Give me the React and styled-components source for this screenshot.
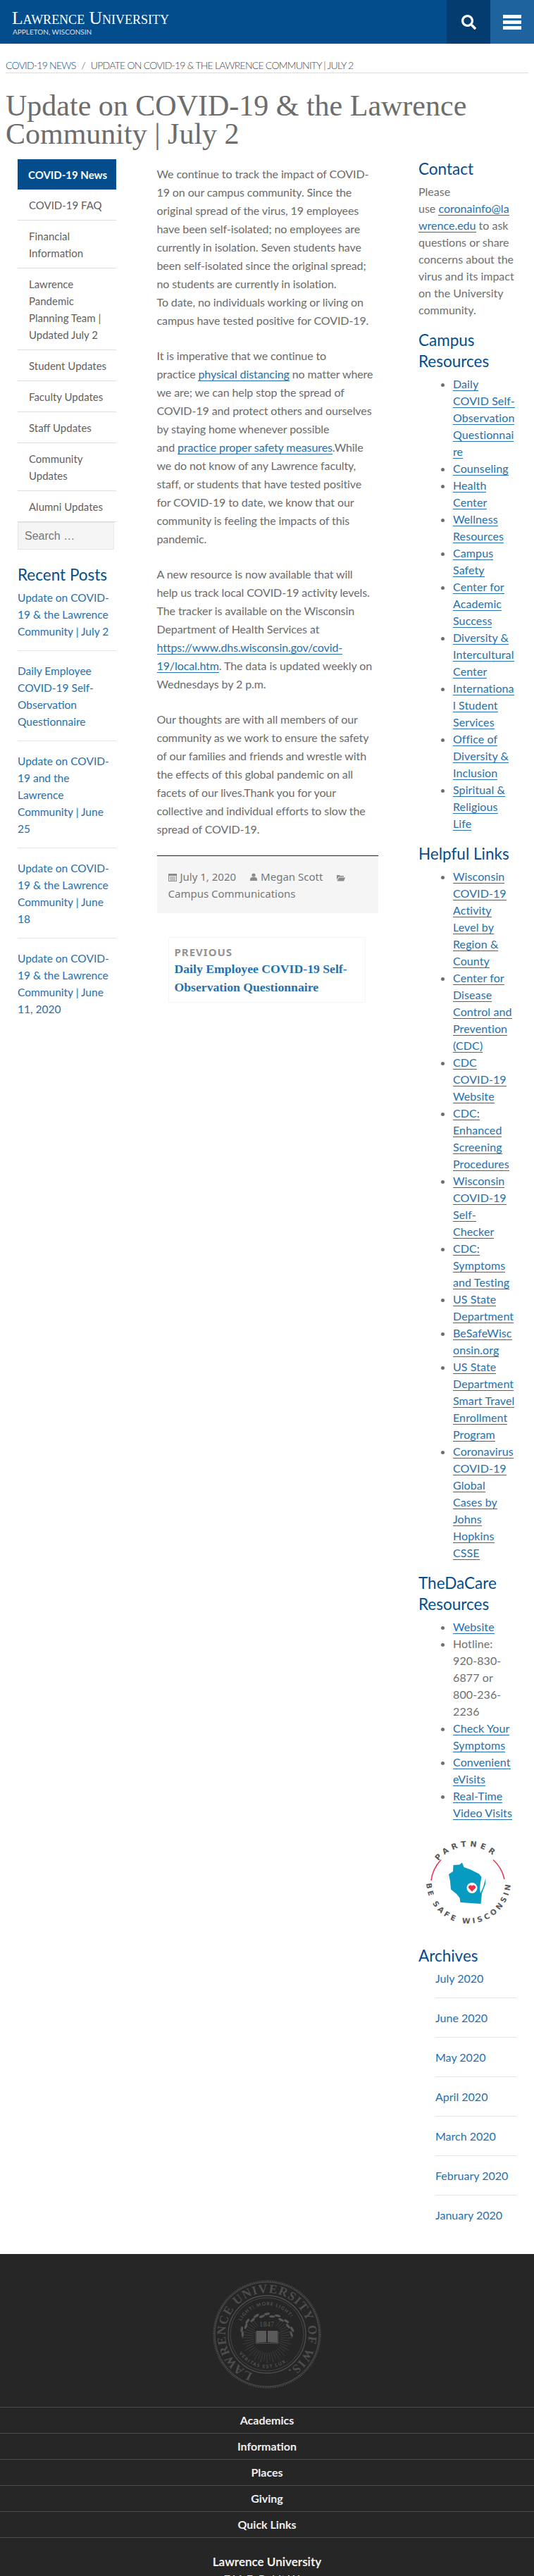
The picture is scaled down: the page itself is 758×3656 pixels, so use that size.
import styled, { createGlobalStyle } from "styled-components";
import { FaSearch } from "react-icons/fa";

const GlobalStyle = createGlobalStyle`
  html, body { margin: 0; padding: 0; background: #fff; }
  body { font-family: Lato, "Liberation Sans", sans-serif; color: #6b6b6b; }
  * { box-sizing: border-box; }
`;

const Page = styled.div`
  height: 3656px;
  overflow: hidden;
`;

const Header = styled.header`
  display: flex;
  align-items: stretch;
  height: 62px;
  background: #034d8c;
`;

const Brand = styled.div`
  flex: 1;
  padding: 13px 0 0 17px;
  color: #fff;
`;

const BrandName = styled.div`
  font-family: "Liberation Serif", serif;
  font-variant: small-caps;
  font-size: 25.5px;
  line-height: 25px;
`;

const BrandSub = styled.div`
  font-size: 10px;
  line-height: 12px;
  margin: 1px 0 0 1px;
  color: #d5e2ee;
`;

const HeaderButton = styled.div`
  width: 62px;
  display: flex;
  flex-direction: column;
  align-items: center;
  justify-content: center;
  gap: 3px;
  color: #fff;
  background: ${(p) => (p.$light ? "#1e639e" : "#033d70")};
`;

const MenuBar = styled.span`
  width: 26px;
  height: 5px;
  background: #fff;
`;

const Breadcrumb = styled.div`
  margin: 20px 8px 0;
  height: 22px;
  border-bottom: 1px solid #ddd;
  font-size: 14px;
  line-height: 21px;
  font-weight: 300;
  letter-spacing: -0.75px;
  text-transform: uppercase;
  color: #444;
  white-space: nowrap;
  a { color: #034d8c; }
  i { font-style: normal; margin: 0 8px; }
`;

const Title = styled.h1`
  margin: 26px 8px 0;
  font-family: "Liberation Serif", serif;
  font-size: 42px;
  line-height: 40px;
  font-weight: 400;
  color: #6d6d6d;
`;

const Columns = styled.main`
  display: grid;
  grid-template-columns: 140px 314px 139px;
  column-gap: 57.5px;
  padding: 15px 0 28px 25px;
`;

const NavList = styled.nav`
  display: flex;
  flex-direction: column;
  margin-top: 1px;
`;

const NavItem = styled.a`
  display: block;
  padding: 10px 8px 9px 16px;
  font-size: 15px;
  line-height: 24px;
  color: #5f5f5f;
  border-bottom: 1px solid #ddd;
`;

const NavActive = styled.a`
  display: block;
  padding: 10px 5px 9px 15px;
  background: #034d8c;
  color: #fff;
  font-weight: 700;
  font-size: 15px;
  line-height: 24px;
`;

const SearchBox = styled.input`
  display: block;
  width: 137px;
  height: 39px;
  padding: 0 9px;
  background: #f5f5f5;
  border: 1px solid #e6e6e6;
  font-family: "Liberation Sans", sans-serif;
  font-size: 16px;
  &::placeholder { color: #777; opacity: 1; }
`;

const WidgetTitle = styled.h2`
  margin: ${(p) => p.$top ?? 16}px 0 5px;
  font-size: 22.5px;
  line-height: 30px;
  font-weight: 400;
  color: #034d8c;
`;

const PostList = styled.div`
  display: flex;
  flex-direction: column;
`;

const PostLink = styled.a`
  display: block;
  padding: 16px 0 15px;
  font-size: 15.5px;
  line-height: 24px;
  color: #2570ad;
  border-bottom: 1px solid #e6e6e6;
  &:first-child { padding-top: 0; }
  &:last-child { border-bottom: none; }
`;

const Article = styled.article`
  padding-top: 9px;
`;

const Para = styled.p`
  margin: 0 0 24px;
  font-size: 16px;
  line-height: 26px;
  letter-spacing: -0.1px;
  color: #6b6b6b;
`;

const TextLink = styled.a`
  color: #2570ad;
  border-bottom: 1px solid #2570ad;
`;

const MetaBox = styled.div`
  margin-top: 23px;
  padding: 17px 16px 16px;
  background: #f5f5f5;
  border-top: 1px solid #222;
  font-family: "Noto Sans", sans-serif;
  font-size: 15px;
  line-height: 24px;
  color: #777;
`;

const MetaItem = styled.span`
  margin-right: 20px;
  svg { vertical-align: -1px; margin-right: 5px; }
`;

const PrevCard = styled.div`
  margin: 34px 18px 0 16px;
  padding: 9px 9px 9px 8px;
  height: 93px;
  border: 1px solid #f6f6f6;
  border-radius: 2px;
`;

const PrevLabel = styled.div`
  font-family: "Noto Sans", sans-serif;
  font-size: 15px;
  line-height: 22px;
  font-weight: 700;
  letter-spacing: 1px;
  color: #939393;
`;

const PrevTitle = styled.a`
  display: block;
  font-family: "Liberation Serif", serif;
  font-size: 17.7px;
  line-height: 26px;
  font-weight: 700;
  color: #2570ad;
`;

const Aside = styled.aside`
  min-width: 0;
`;

const SideText = styled.p`
  margin: 0;
  font-size: 16px;
  line-height: 24px;
  color: #6f6f6f;
  overflow-wrap: anywhere;
`;

const LinkList = styled.ul`
  margin: 0;
  padding: 0 2px 0 49px;
  font-size: 16px;
  line-height: 24px;
  letter-spacing: 0.1px;
  color: #6f6f6f;
  overflow-wrap: anywhere;
`;

const Partner = styled.svg`
  display: block;
  margin-top: 15px;
`;

const ArchiveList = styled.div`
  display: flex;
  flex-direction: column;
  padding-left: 24px;
`;

const ArchiveLink = styled.a`
  display: block;
  padding: 16px 0 15px;
  font-size: 16px;
  line-height: 24px;
  color: #2570ad;
  border-bottom: 1px solid #e6e6e6;
  &:first-child { padding-top: 0; }
  &:last-child { border-bottom: none; }
`;

const Footer = styled.footer`
  background: #262626;
  padding-top: 37px;
  text-align: center;
`;

const Seal = styled.svg`
  display: block;
  margin: 0 auto 26px;
`;

const FooterRow = styled.a`
  display: block;
  height: 37px;
  border-top: 1px solid #4d4d4d;
  font-size: 16px;
  line-height: 35px;
  font-weight: 700;
  color: #eee;
  &:last-of-type { border-bottom: 1px solid #4d4d4d; height: 38px; }
`;

const FooterName = styled.div`
  margin-top: 22px;
  font-size: 17px;
  line-height: 24px;
  font-weight: 700;
  color: #eee;
`;

const FooterAddress = styled.div`
  font-size: 16px;
  line-height: 24px;
  color: #ddd;
`;

const navItems = [
  "COVID-19 FAQ",
  "Financial Information",
  "Lawrence Pandemic Planning Team | Updated July 2",
  "Student Updates",
  "Faculty Updates",
  "Staff Updates",
  "Community Updates",
  "Alumni Updates",
];

const recentPosts = [
  "Update on COVID-19 & the Lawrence Community | July 2",
  "Daily Employee COVID-19 Self-Observation Questionnaire",
  "Update on COVID-19 and the Lawrence Community | June 25",
  "Update on COVID-19 & the Lawrence Community | June 18",
  "Update on COVID-19 & the Lawrence Community | June 11, 2020",
];

const campusLinks = [
  "Daily COVID Self-Observation Questionnaire",
  "Counseling",
  "Health Center",
  "Wellness Resources",
  "Campus Safety",
  "Center for Academic Success",
  "Diversity & Intercultural Center",
  "International Student Services",
  "Office of Diversity & Inclusion",
  "Spiritual & Religious Life",
];

const helpfulLinks = [
  "Wisconsin COVID-19 Activity Level by Region & County",
  "Center for Disease Control and Prevention (CDC)",
  "CDC COVID-19 Website",
  "CDC: Enhanced Screening Procedures",
  "Wisconsin COVID-19 Self-Checker",
  "CDC: Symptoms and Testing",
  "US State Department",
  "BeSafeWisconsin.org",
  "US State Department Smart Travel Enrollment Program",
  "Coronavirus COVID-19 Global Cases by Johns Hopkins CSSE",
];

const archives = ["July 2020", "June 2020", "May 2020", "April 2020", "March 2020", "February 2020", "January 2020"];
const footerLinks = ["Academics", "Information", "Places", "Giving", "Quick Links"];

function CalendarIcon() {
  return (
    <svg width="12" height="12" viewBox="0 0 12 12" fill="#8b8b8b">
      <path d="M0 1h12v11H0zM1 4v7h10V4zM2 5.2h8v1H2zM2 7.2h8v1H2zM2 9.2h8v1H2z" fillRule="evenodd" />
    </svg>
  );
}

function UserIcon() {
  return (
    <svg width="10" height="12" viewBox="0 0 10 12" fill="#8b8b8b">
      <circle cx="5" cy="3" r="2.6" />
      <path d="M0 11V8.5C0 7 1.5 6 3 6h4c1.5 0 3 1 3 2.5V11z" />
    </svg>
  );
}

function FolderIcon() {
  return (
    <svg width="12" height="10" viewBox="0 0 12 10" fill="#8b8b8b">
      <path d="M0 1h4l1 1h5v1.5H2.5L0 8z" />
      <path d="M3 4.5h9L10 9.5H.6z" />
    </svg>
  );
}

function PartnerLogo() {
  return (
    <Partner width="139" height="150" viewBox="4 0 139 150">
      <defs>
        <path id="partner-top" d="M28 48A54 54 0 0 1 122 48" />
        <path id="partner-bottom" d="M15 70A60 60 0 0 0 135 70" />
      </defs>
      <path d="M36 39.5A52 52 0 0 0 22 69" fill="none" stroke="#e8304f" strokeWidth="1.5" />
      <path d="M110 39.5A52 52 0 0 1 126 67" fill="none" stroke="#e8304f" strokeWidth="1.5" />
      <text fontFamily="'DejaVu Sans', sans-serif" fontWeight="700" fontSize="11" fill="#58595b">
        <textPath href="#partner-top" textLength="86" startOffset="8">PARTNER</textPath>
      </text>
      <text fontFamily="'DejaVu Sans', sans-serif" fontWeight="700" fontSize="10.5" fill="#58595b">
        <textPath href="#partner-bottom" textLength="180" startOffset="3">BE SAFE WISCONSIN</textPath>
      </text>
      <path
        d="M47 60L53 56L53.5 47L62 46.5L66 43.5L68.5 50L78 53.5L90 59.5L93.5 64L92 72L91 81L92 87L96 78L99.5 65L99 74L94 87L92.5 102L63.5 100L62.5 93.5L58 88L50 81.5L49 70Z"
        fill="#079bc2"
      />
      <circle cx="80" cy="79.5" r="7.5" fill="#fff" />
      <path d="M80 84.5L75.5 80A2.6 2.6 0 0 1 80 76.8A2.6 2.6 0 0 1 84.5 80Z" fill="#e8304f" />
    </Partner>
  );
}

function SealLogo() {
  const rays = Array.from({ length: 48 }, (_, i) => (i * 360) / 48);
  const leaves = Array.from({ length: 15 }, (_, i) => -172 + (i * 164) / 14);
  return (
    <Seal width="154" height="154" viewBox="-77 -77 154 154">
      <defs>
        <path id="seal-outer" d="M-20.2 55.4A59 59 0 1 1 20.2 55.4" />
        <path id="seal-top" d="M-36.6 -18.7A41 41 0 0 1 36.6 -18.7" />
        <path id="seal-bottom" d="M-39.8 26.8A48 48 0 0 0 39.8 26.8" />
      </defs>
      <g fill="none" stroke="#4d4d4d">
        <circle r="75.5" strokeWidth="2.5" strokeDasharray="1.2 1.2" />
        <circle r="74" strokeWidth="1" />
        <circle r="55" strokeWidth="1.4" />
        <circle r="52" strokeWidth="0.8" />
      </g>
      <text fontFamily="'Liberation Serif', serif" fontSize="17.5" fontWeight="700" fill="#4d4d4d">
        <textPath href="#seal-outer" textLength="318">LAWRENCE UNIVERSITY OF WIS.</textPath>
      </text>
      <text fontFamily="Lato, sans-serif" fontSize="6.5" fontWeight="700" fill="#555">
        <textPath href="#seal-top" textLength="84">LIGHT! MORE LIGHT!</textPath>
      </text>
      <text fontFamily="Lato, sans-serif" fontSize="6.5" fontWeight="700" fill="#555">
        <textPath href="#seal-bottom" textLength="78">VERITAS EST LUX.</textPath>
      </text>
      <text x="0" y="-11" textAnchor="middle" fontFamily="'Liberation Serif', serif" fontSize="9.5" letterSpacing="0.6" fill="#5a5a5a">
        1847
      </text>
      <g stroke="#4d4d4d" strokeWidth="0.6">
        {rays.map((a) => {
          if (a > 325 || a < 35) return null;
          const r = (a * Math.PI) / 180;
          const inner = (a > 60 && a < 120) || (a > 240 && a < 300) ? 19 : 21;
          const outer = a % 15 === 0 ? 36 : 32;
          return <line key={a} x1={Math.sin(r) * inner} y1={-Math.cos(r) * inner + 5} x2={Math.sin(r) * outer} y2={-Math.cos(r) * outer + 5} />;
        })}
      </g>
      <path d="M-15 -5H-1V11L-15 12ZM1 -5H15L15 12L1 11Z" fill="#5a5a5a" />
      <path d="M-16 -4V13L0 12.5L16 13V-4" fill="none" stroke="#5a5a5a" strokeWidth="0.8" />
      <g fill="#565656">
        {leaves.map((a, i) => {
          const r = (a * Math.PI) / 180;
          const cx = Math.cos(r) * (i % 2 ? 38 : 35);
          const cy = Math.sin(r) * (i % 2 ? 33 : 30) + 4;
          return <ellipse key={a} cx={cx} cy={cy} rx="4.2" ry="1.7" transform={`rotate(${a + 80} ${cx} ${cy})`} />;
        })}
      </g>
    </Seal>
  );
}

export default function App() {
  return (
    <Page>
      <GlobalStyle />
      <Header>
        <Brand>
          <BrandName>Lawrence University</BrandName>
          <BrandSub>APPLETON, WISCONSIN</BrandSub>
        </Brand>
        <HeaderButton>
          <FaSearch size={21} />
        </HeaderButton>
        <HeaderButton $light>
          <MenuBar />
          <MenuBar />
          <MenuBar />
        </HeaderButton>
      </Header>

      <Breadcrumb>
        <a>COVID-19 News</a>
        <i>/</i>
        Update on COVID-19 &amp; the Lawrence Community | July 2
      </Breadcrumb>
      <Title>Update on COVID-19 &amp; the Lawrence Community | July 2</Title>

      <Columns>
        <Aside>
          <NavList>
            <NavActive>COVID-19 News</NavActive>
            {navItems.map((item) => (
              <NavItem key={item}>{item}</NavItem>
            ))}
          </NavList>
          <SearchBox placeholder="Search …" />
          <WidgetTitle $top={21}>Recent Posts</WidgetTitle>
          <PostList>
            {recentPosts.map((post) => (
              <PostLink key={post}>{post}</PostLink>
            ))}
          </PostList>
        </Aside>

        <Article>
          <Para>
            We continue to track the impact of COVID-19 on our campus community. Since the original spread of the
            virus, 19 employees have been self-isolated; no employees are currently in isolation. Seven students have
            been self-isolated since the original spread; no students are currently in isolation.
            <br />
            To date, no individuals working or living on campus have tested positive for COVID-19.
          </Para>
          <Para>
            It is imperative that we continue to practice&nbsp;<TextLink>physical distancing</TextLink> no matter
            where we are; we can help stop the spread of COVID-19 and protect others and ourselves by staying home
            whenever possible and&nbsp;<TextLink>practice proper safety measures</TextLink>.While
            <br />
            we do not know of any Lawrence faculty, staff, or students that have tested positive for COVID-19 to date,
            we know that our community is feeling the impacts of this pandemic.
          </Para>
          <Para>
            A new resource is now available that will
            <br />
            help us track local COVID-19 activity levels.
            <br />
            The tracker is available on the Wisconsin Department of Health Services at{" "}
            <TextLink>https://www.dhs.wisconsin.gov/covid-19/local.htm</TextLink>. The data is updated weekly on
            Wednesdays by 2 p.m.
          </Para>
          <Para>
            Our thoughts are with all members of our community as we work to ensure the safety of our families and
            friends and wrestle with the effects of this global pandemic on all facets of our lives.Thank you for your
            collective and individual efforts to slow the spread of COVID-19.
          </Para>
          <MetaBox>
            <MetaItem>
              <CalendarIcon />
              July 1, 2020
            </MetaItem>
            <MetaItem>
              <UserIcon />
              Megan Scott
            </MetaItem>
            <MetaItem>
              <FolderIcon />
            </MetaItem>
            Campus Communications
          </MetaBox>
          <PrevCard>
            <PrevLabel>PREVIOUS</PrevLabel>
            <PrevTitle>Daily Employee COVID-19 Self-Observation Questionnaire</PrevTitle>
          </PrevCard>
        </Article>

        <Aside>
          <WidgetTitle $top={0}>Contact</WidgetTitle>
          <SideText>
            Please use&nbsp;<TextLink>coronainfo@lawrence.edu</TextLink> to ask questions or share concerns about the
            virus and its impact on the University community.
          </SideText>
          <WidgetTitle>Campus Resources</WidgetTitle>
          <LinkList>
            {campusLinks.map((link) => (
              <li key={link}>
                <TextLink>{link}</TextLink>
              </li>
            ))}
          </LinkList>
          <WidgetTitle>Helpful Links</WidgetTitle>
          <LinkList>
            {helpfulLinks.map((link) => (
              <li key={link}>
                <TextLink>{link}</TextLink>
              </li>
            ))}
          </LinkList>
          <WidgetTitle>TheDaCare Resources</WidgetTitle>
          <LinkList>
            <li>
              <TextLink>Website</TextLink>
            </li>
            <li>Hotline: 920-830-6877 or 800-236-2236</li>
            <li>
              <TextLink>Check Your Symptoms</TextLink>
            </li>
            <li>
              <TextLink>Convenient eVisits</TextLink>
            </li>
            <li>
              <TextLink>Real-Time Video Visits</TextLink>
            </li>
          </LinkList>
          <PartnerLogo />
          <WidgetTitle $top={11}>Archives</WidgetTitle>
          <ArchiveList>
            {archives.map((month) => (
              <ArchiveLink key={month}>{month}</ArchiveLink>
            ))}
          </ArchiveList>
        </Aside>
      </Columns>

      <Footer>
        <SealLogo />
        {footerLinks.map((link) => (
          <FooterRow key={link}>{link}</FooterRow>
        ))}
        <FooterName>Lawrence University</FooterName>
        <FooterAddress>711 E. Boldt Way</FooterAddress>
      </Footer>
    </Page>
  );
}
